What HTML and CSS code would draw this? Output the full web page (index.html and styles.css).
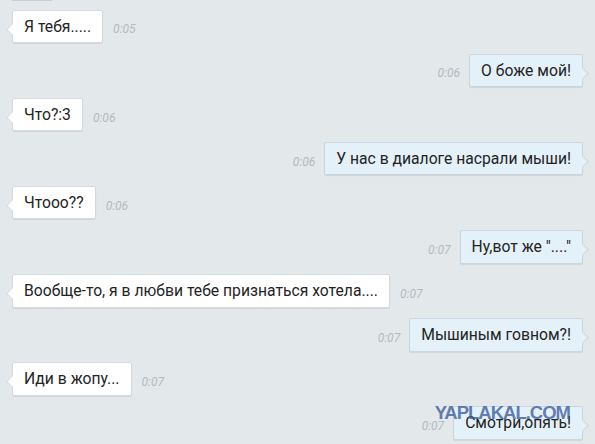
FILE: index.html
```html
<!DOCTYPE html>
<html lang="ru">
<head>
<meta charset="utf-8">
<link rel="stylesheet" href="styles.css">
</head>
<body>
<div class="chat">
  <div class="prev"></div>
  <div class="row in"><div class="bubble">Я тебя.....</div><span class="time">0:05</span></div>
  <div class="row out"><span class="time">0:06</span><div class="bubble">О боже мой!</div></div>
  <div class="row in"><div class="bubble">Что?:3</div><span class="time">0:06</span></div>
  <div class="row out"><span class="time">0:06</span><div class="bubble">У нас в диалоге насрали мыши!</div></div>
  <div class="row in"><div class="bubble">Чтооо??</div><span class="time">0:06</span></div>
  <div class="row out"><span class="time">0:07</span><div class="bubble">Ну,вот же "...."</div></div>
  <div class="row in"><div class="bubble">Вообще-то, я в любви тебе признаться хотела....</div><span class="time">0:07</span></div>
  <div class="row out"><span class="time">0:07</span><div class="bubble">Мышиным говном?!</div></div>
  <div class="row in"><div class="bubble">Иди в жопу...</div><span class="time">0:07</span></div>
  <div class="row out last"><span class="time">0:07</span><div class="bubble">Смотри,опять!</div><span class="watermark">YAPLAKAL.COM</span></div>
</div>
</body>
</html>
```
FILE: styles.css
```css
* { box-sizing: border-box; }
html, body {
  margin: 0;
  padding: 0;
  background: #e3e8eb;
  width: 595px;
  height: 444px;
  overflow: hidden;
}
.chat {
  display: flex;
  flex-direction: column;
  gap: 10.6px;
  padding: 0 12px;
  font-family: Roboto, "Liberation Sans", sans-serif;
}
.prev {
  width: 40px;
  height: 1px;
  margin-bottom: -2px;
  background: #c9d0d5;
}
.row {
  display: flex;
  align-items: center;
  position: relative;
}
.row.out { justify-content: flex-end; }
.bubble {
  position: relative;
  height: 33.5px;
  line-height: 17px;
  padding: 7px 11px;
  font-size: 15.7px;
  color: #232323;
  background: #ffffff;
  border: 1px solid #d3dadf;
  border-radius: 2px;
  box-shadow: 0 1px 1px rgba(0, 0, 0, 0.08);
  white-space: nowrap;
}
.out .bubble {
  background: #e4f1f9;
  border-color: #c9d6df;
}
.bubble::before {
  content: "";
  position: absolute;
  top: 14px;
  width: 8px;
  height: 8px;
  background: inherit;
  transform: rotate(45deg);
}
.in .bubble::before {
  left: -5px;
  border-left: 1px solid #d3dadf;
  border-bottom: 1px solid #d3dadf;
}
.out .bubble::before {
  right: -5px;
  border-right: 1px solid #c9d6df;
  border-top: 1px solid #c9d6df;
}
.time {
  font-size: 12px;
  font-style: italic;
  color: #b3bac1;
  margin-top: 6px;
}
.in .time { margin-left: 10px; }
.out .time { margin-right: 9px; }
.watermark {
  position: absolute;
  right: 13px;
  top: -4px;
  font-family: "Liberation Sans", Arial, sans-serif;
  font-weight: bold;
  font-size: 18.5px;
  letter-spacing: -1px;
  color: rgba(60, 92, 156, 0.8);
}
```
